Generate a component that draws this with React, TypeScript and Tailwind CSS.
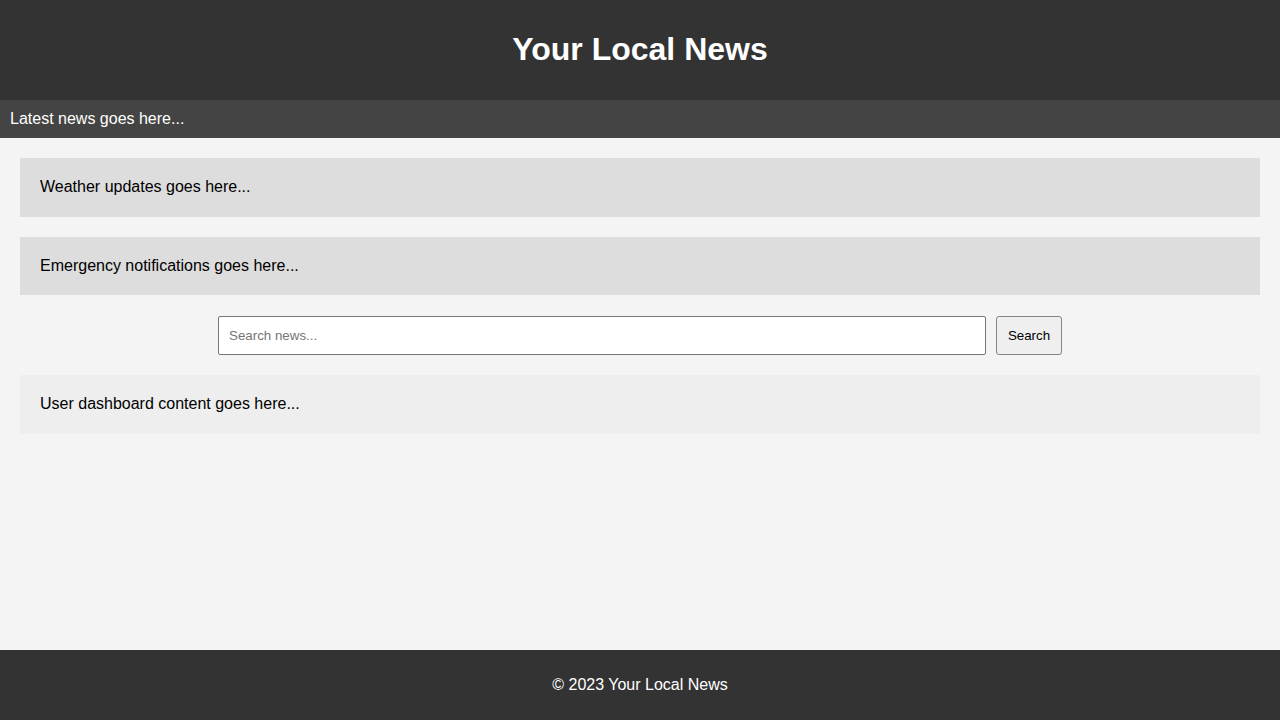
export default function App() {
  return (
    <div className="min-h-screen bg-[#f4f4f4] text-black" style={{ fontFamily: '"Liberation Sans", Arial, sans-serif' }}>
      <header className="bg-[#333333] text-white text-center py-[10px]">
        <h1 className="text-[32px] font-bold leading-[37px] my-[21.44px]">Your Local News</h1>
      </header>
      <div className="bg-[#444444] text-white p-[10px] text-[16px] leading-[18.4px]">Latest news goes here...</div>
      <main className="p-[20px] flex flex-col gap-[20px]">
        <div className="bg-[#dddddd] p-[20px] text-[16px] leading-[18.4px]">Weather updates goes here...</div>
        <div className="bg-[#dddddd] p-[20px] text-[16px] leading-[18.4px]">Emergency notifications goes here...</div>
        <div className="flex justify-center mt-px">
          <input
            type="text"
            placeholder="Search news..."
            className="w-[768px] h-[39px] px-[10px] bg-white border border-[#767676] rounded-[2px] text-[13.333px] placeholder:text-[#757575] outline-none"
          />
          <button className="ml-[10px] w-[66px] h-[39px] px-[10px] bg-[#efefef] border border-[#858585] rounded-[3px] text-[13.333px] text-black">
            Search
          </button>
        </div>
        <div className="bg-[#eeeeee] p-[20px] text-[16px] leading-[18.4px]">User dashboard content goes here...</div>
      </main>
      <footer className="fixed bottom-0 left-0 right-0 bg-[#333333] text-white text-center p-[10px]">
        <p className="my-[16px] text-[16px] leading-[18px]">© 2023 Your Local News</p>
      </footer>
    </div>
  );
}
